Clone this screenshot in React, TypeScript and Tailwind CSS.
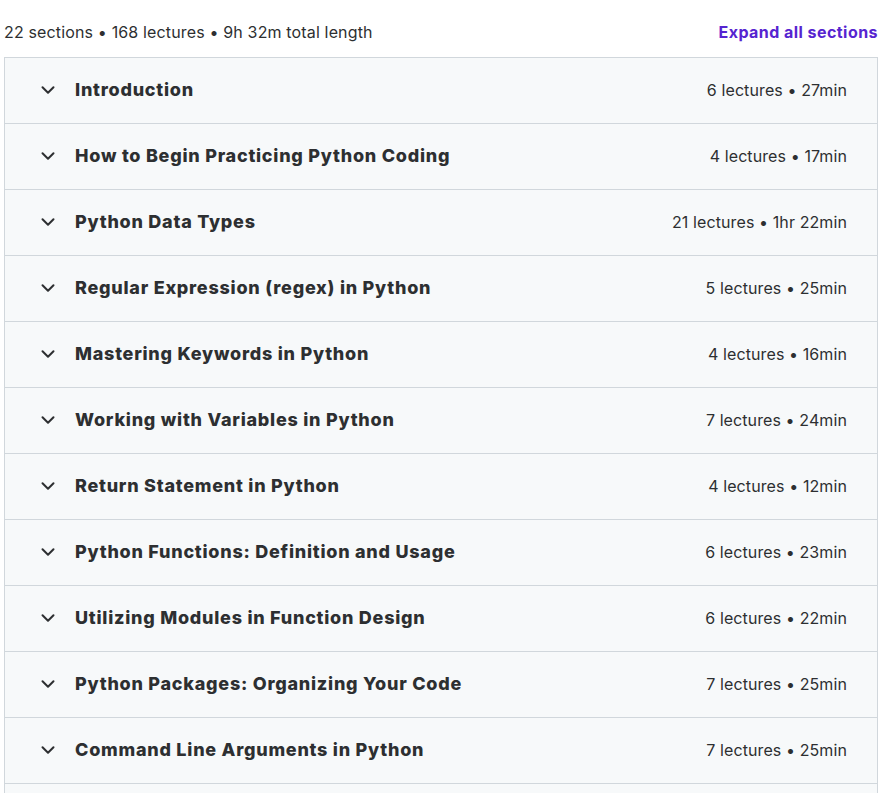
import { ChevronDown } from "lucide-react"

interface Section {
  title: string
  meta: string
}

const sections: Section[] = [
  { title: "Introduction", meta: "6 lectures • 27min" },
  { title: "How to Begin Practicing Python Coding", meta: "4 lectures • 17min" },
  { title: "Python Data Types", meta: "21 lectures • 1hr 22min" },
  { title: "Regular Expression (regex) in Python", meta: "5 lectures • 25min" },
  { title: "Mastering Keywords in Python", meta: "4 lectures • 16min" },
  { title: "Working with Variables in Python", meta: "7 lectures • 24min" },
  { title: "Return Statement in Python", meta: "4 lectures • 12min" },
  { title: "Python Functions: Definition and Usage", meta: "6 lectures • 23min" },
  { title: "Utilizing Modules in Function Design", meta: "6 lectures • 22min" },
  { title: "Python Packages: Organizing Your Code", meta: "7 lectures • 25min" },
  { title: "Command Line Arguments in Python", meta: "7 lectures • 25min" },
  { title: "Object-Oriented Programming in Python", meta: "8 lectures • 31min" },
]

export default function App() {
  return (
    <div className="w-[883px] h-[793px] overflow-hidden bg-white pl-[4px] pr-[5px] font-['Inter',sans-serif] text-[#2d2f31]">
      {/* summary line */}
      <div className="flex items-center justify-between pt-[20px] pb-[13px] leading-[24px]">
        <span className="text-[16px] tracking-[0.15px]">22 sections • 168 lectures • 9h 32m total length</span>
        <button className="text-[16px] font-bold tracking-[0.45px] text-[#5624d0]">Expand all sections</button>
      </div>

      {/* curriculum list */}
      <div className="border-t border-l border-r border-[#d1d7dc]">
        {sections.map((s) => (
          <div
            key={s.title}
            className="flex h-[66px] items-center justify-between border-b border-[#d1d7dc] bg-[#f7f9fa] pb-[2px] pl-[32px] pr-[30px]"
          >
            <div className="flex items-center gap-[16px]">
              <ChevronDown size={22} strokeWidth={2.2} className="text-[#2d2f31]" />
              <span className="text-[18px] font-extrabold tracking-[0.75px]">{s.title}</span>
            </div>
            <span className="text-[16px] tracking-[0.1px]">{s.meta}</span>
          </div>
        ))}
      </div>
    </div>
  )
}
